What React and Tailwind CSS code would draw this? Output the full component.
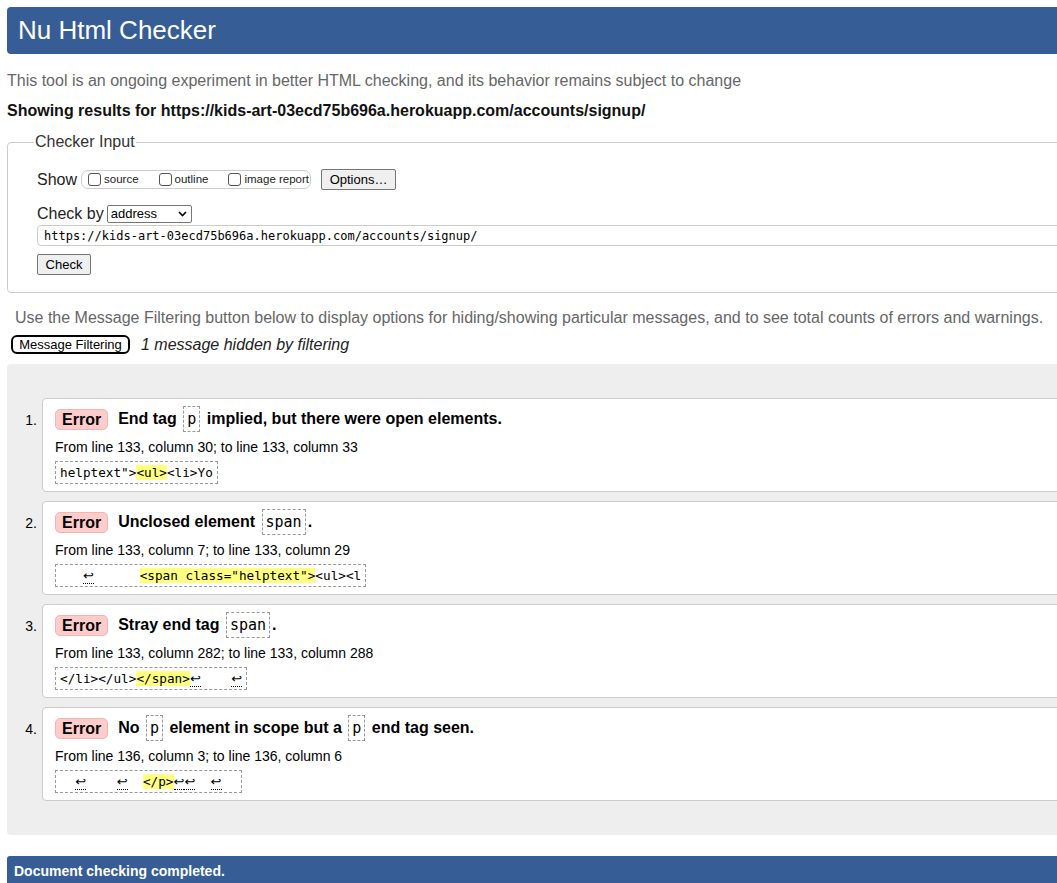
import React from 'react';

const mono = "font-['DejaVu_Sans_Mono','Liberation_Mono',monospace]";

const messages = [
    {
        parts: ['End tag ', { code: 'p' }, ' implied, but there were open elements.'],
        location: 'From line 133, column 30; to line 133, column 33',
        extract: ['helptext">', { hl: '<ul>' }, '<li>Yo'],
    },
    {
        parts: ['Unclosed element ', { code: 'span' }, '.'],
        location: 'From line 133, column 7; to line 133, column 29',
        extract: ['   ', { lf: true }, '      ', { hl: '<span class="helptext">' }, '<ul><l'],
    },
    {
        parts: ['Stray end tag ', { code: 'span' }, '.'],
        location: 'From line 133, column 282; to line 133, column 288',
        extract: ['</li></ul>', { hl: '</span>' }, { lf: true }, '    ', { lf: true }, ''],
    },
    {
        parts: ['No ', { code: 'p' }, ' element in scope but a ', { code: 'p' }, ' end tag seen.'],
        location: 'From line 136, column 3; to line 136, column 6',
        extract: ['  ', { lf: true }, '    ', { lf: true }, '  ', { hl: '</p>' }, { lf: true }, { lf: true }, '  ', { lf: true }, '  '],
    },
];

const Segment = ({ seg }) => {
    if (typeof seg === 'string') return <span>{seg}</span>;
    if (seg.hl) return <span className="bg-[#ffff80]">{seg.hl}</span>;
    if (seg.lf) return <span className="font-['DejaVu_Sans',sans-serif] text-[13px] border-b border-dotted border-black">↩</span>;
    return null;
};

const MessageCard = ({ msg }) => (
    <div className="bg-white border border-[#ccc] rounded-[4px] h-[94px] pl-[12px] pt-[7px]">
        <div className="flex items-center h-[26px] text-[16px] font-bold text-black">
            <span className="bg-[#fcc] border border-[#f3b4b4] rounded-[5px] h-[21px] px-[6px] leading-[19px] mr-[10px]">Error</span>
            {msg.parts.map((p, i) =>
                typeof p === 'string' ? (
                    <span key={i} className="whitespace-pre">{p}</span>
                ) : (
                    <code key={i} className={`${mono} font-normal text-[15px] border border-dashed border-[#999] px-[3px] h-[26px] leading-[24px] mx-[2px]`}>{p.code}</code>
                )
            )}
        </div>
        <p className="text-[14px] leading-[16px] mt-[7px] text-black">{msg.location}</p>
        <div className="mt-[5px]">
            <span className={`${mono} inline-block whitespace-pre text-[12.7px] leading-[17px] border border-dashed border-[#999] px-[4px] py-[2px] text-black`}>
                {msg.extract.map((s, i) => <Segment key={i} seg={s} />)}
            </span>
        </div>
    </div>
);

const Checkbox = ({ label, className }) => (
    <>
        <span className="w-[13px] h-[13px] border border-[#555] rounded-[3px] bg-white mr-[3px]"></span>
        <span className={className}>{label}</span>
    </>
);

const App = () => {
    return (
        <div className="w-[1057px] h-[883px] overflow-hidden bg-white font-['Liberation_Sans',Arial,sans-serif]">
            <div className="w-[1120px] pl-[7px] pt-[7px]">
                <h1 className="h-[47px] bg-[#365d95] rounded-[4px] pl-[11px] flex items-center text-white text-[26px] font-normal">Nu Html Checker</h1>

                <p className="mt-[18px] text-[16px] leading-[18px] text-[#666]">This tool is an ongoing experiment in better HTML checking, and its behavior remains subject to change</p>
                <p className="mt-[12px] text-[16px] leading-[18px] font-bold text-[#111]">Showing results for https://kids-art-03ecd75b696a.herokuapp.com/accounts/signup/</p>

                <fieldset className="mt-[13px] border border-[#ccc] rounded-[4px] pl-[29px] h-[160px]">
                    <legend className="ml-[-3px] px-[1px] text-[16px] leading-[18px] text-[#333]">Checker Input</legend>
                    <div className="flex items-center mt-[18px] h-[21px]">
                        <span className="text-[16px] text-[#222] mr-[4px]">Show</span>
                        <div className="flex items-center h-[19px] w-[230px] border border-[#ccc] rounded-[7px] pl-[6px] text-[11.5px] text-[#222]">
                            <Checkbox label="source" className="mr-[20px]" />
                            <Checkbox label="outline" className="mr-[20px]" />
                            <Checkbox label="image report" />
                        </div>
                        <span className="ml-[10px] h-[21px] w-[75px] border border-[#767676] rounded-[2px] bg-[#efefef] text-[13px] flex items-center justify-center text-black">Options…</span>
                    </div>
                    <div className="flex items-center mt-[14px] h-[19px]">
                        <span className="text-[16px] text-[#222] mr-[3px]">Check by</span>
                        <span className="h-[18px] w-[85px] border border-[#767676] rounded-[2px] bg-white text-[13px] pl-[3px] flex items-center justify-between pr-[4px] text-black">
                            address
                            <svg width="9" height="6" viewBox="0 0 9 6"><path d="M1 1l3.5 3.5L8 1" fill="none" stroke="#000" strokeWidth="1.6" /></svg>
                        </span>
                    </div>
                    <div className={`${mono} mt-[2px] h-[21px] border border-[#ccc] rounded-[4px] pl-[6px] text-[12px] leading-[20px] text-black`}>https://kids-art-03ecd75b696a.herokuapp.com/accounts/signup/</div>
                    <span className="mt-[8px] h-[21px] w-[54px] border border-[#767676] rounded-[2px] bg-[#efefef] text-[13px] flex items-center justify-center text-black">Check</span>
                </fieldset>

                <p className="mt-[16px] ml-[8px] text-[16px] leading-[18px] text-[#666]">Use the Message Filtering button below to display options for hiding/showing particular messages, and to see total counts of errors and warnings.</p>
                <div className="flex items-center mt-[8px] h-[19px]">
                    <span className="ml-[4px] h-[19px] w-[119px] border-2 border-black rounded-[6px] text-[13px] leading-[15px] flex items-center justify-center text-black">Message Filtering</span>
                    <em className="ml-[11px] text-[16px] text-[#222]">1 message hidden by filtering</em>
                </div>

                <div className="mt-[10px] bg-[#eee] rounded-[4px] h-[471px] pt-[34px] pl-[13px]">
                    <ol className="flex flex-col gap-[9px]">
                        {messages.map((m, i) => (
                            <li key={i} className="flex">
                                <span className="w-[17px] mr-[5px] text-right text-[14px] pt-[12px] text-black">{i + 1}.</span>
                                <div className="flex-1">
                                    <MessageCard msg={m} />
                                </div>
                            </li>
                        ))}
                    </ol>
                </div>

                <div className="mt-[21px] h-[30px] bg-[#365d95] rounded-t-[3px] pl-[7px] pt-[5px] text-[14px] font-bold text-white">Document checking completed.</div>
            </div>
        </div>
    );
};

export default App;
